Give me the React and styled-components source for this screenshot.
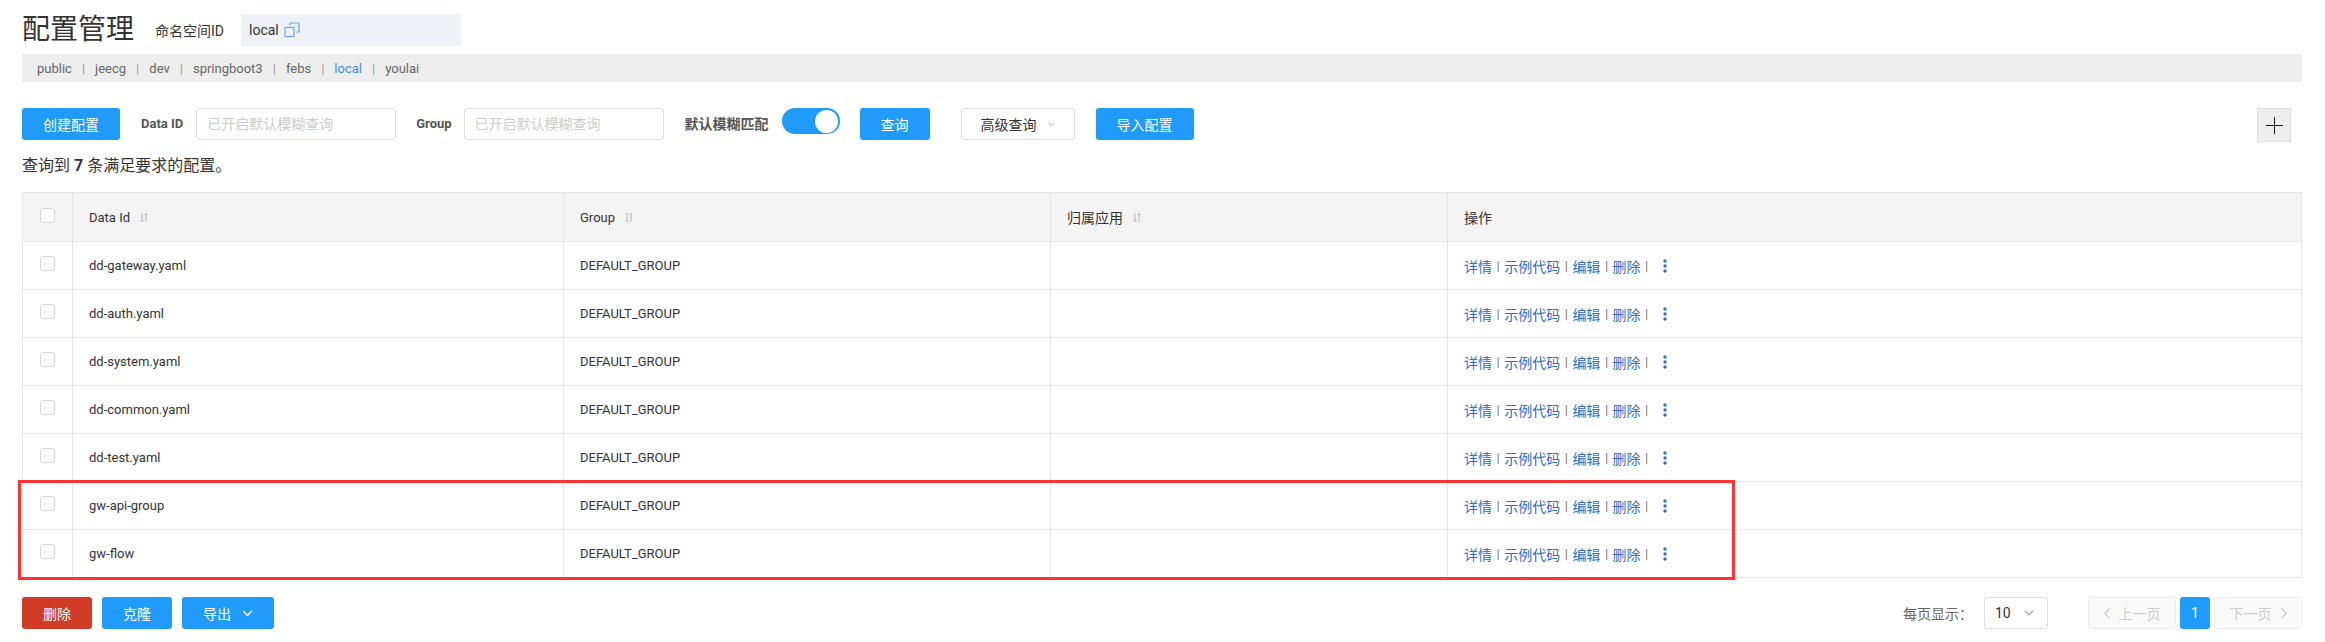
import { Fragment } from 'react';
import styled, { createGlobalStyle, css } from 'styled-components';

const GlobalStyle = createGlobalStyle`
  html, body {
    margin: 0;
    padding: 0;
    background: #fff;
  }
  body {
    font-family: Roboto, "Noto Sans CJK SC", sans-serif;
    color: #333;
  }
  * {
    box-sizing: border-box;
  }
`;

const BLUE = '#209bfa';
const LINK = '#2e6dcb';

const rows = [
  'dd-gateway.yaml',
  'dd-auth.yaml',
  'dd-system.yaml',
  'dd-common.yaml',
  'dd-test.yaml',
  'gw-api-group',
  'gw-flow',
];

const namespaces = ['public', 'jeecg', 'dev', 'springboot3', 'febs', 'local', 'youlai'];

const Page = styled.div`
  padding: 14px 23px 0 22px;
`;

const HeaderRow = styled.div`
  display: flex;
  align-items: center;
  height: 32px;
`;

const Title = styled.h1`
  margin: 0 21px 0 0;
  font-size: 28px;
  font-weight: 400;
  line-height: 32px;
  color: #333;
`;

const NsLabel = styled.span`
  font-size: 14px;
  color: #333;
  margin-right: 17px;
`;

const NsBox = styled.div`
  width: 220px;
  height: 32px;
  background: #eef1f6;
  display: flex;
  align-items: center;
  gap: 5px;
  padding-left: 8px;
  font-size: 14px;
  color: #333;
`;

const NsBar = styled.div`
  margin-top: 8px;
  height: 28px;
  background: #eee;
  display: flex;
  align-items: center;
  padding-left: 15px;
  font-size: 13px;
  color: #666;
`;

const NsItem = styled.span`
  color: ${(p) => (p.$active ? '#3d8ff0' : '#666')};
`;

const NsSep = styled.span`
  margin: 0 10px;
  color: #999;
`;

const Toolbar = styled.div`
  margin-top: 26px;
  height: 34px;
  display: flex;
  align-items: flex-start;
`;

const Button = styled.button`
  height: 32px;
  padding: 0 20px;
  border-radius: 3px;
  border: 1px solid transparent;
  font-family: inherit;
  font-size: 14px;
  display: inline-flex;
  align-items: center;
  gap: 11px;
  cursor: pointer;
  margin-left: ${(p) => p.$ml || 0}px;
  ${(p) =>
    p.$variant === 'danger'
      ? css`
          background: #d23c26;
          color: #fff;
        `
      : p.$variant === 'default'
        ? css`
            background: #fff;
            color: #333;
            border-color: #ddd;
            padding: 0 19px;
          `
        : css`
            background: ${BLUE};
            color: #fff;
          `}
`;

const FieldLabel = styled.span`
  font-size: ${(p) => p.$size || 13}px;
  font-weight: 700;
  color: #555;
  line-height: 32px;
  margin-left: ${(p) => p.$ml}px;
  margin-right: ${(p) => p.$mr}px;
`;

const TextInput = styled.input`
  width: 200px;
  height: 32px;
  border: 1px solid #ddd;
  border-radius: 3px;
  padding: 0 10px;
  font-family: inherit;
  font-size: 14px;
  outline: none;
  &::placeholder {
    color: #ccc;
  }
`;

const Switch = styled.div`
  width: 58px;
  height: 26px;
  border-radius: 13px;
  background: ${BLUE};
  display: flex;
  align-items: center;
  justify-content: flex-end;
  padding-right: 2px;
  margin-right: 20px;
`;

const Knob = styled.span`
  width: 23px;
  height: 23px;
  border-radius: 50%;
  background: #fff;
`;

const PlusButton = styled.button`
  margin-left: auto;
  margin-right: 11px;
  width: 34px;
  height: 34px;
  background: #eee;
  border: 1px solid #ddd;
  padding: 0;
  display: flex;
  align-items: center;
  justify-content: center;
`;

const Summary = styled.p`
  margin: 14px 0 0;
  font-size: 16px;
  line-height: 20px;
  color: #333;
  b {
    font-weight: 700;
  }
`;

const TableWrap = styled.div`
  position: relative;
  margin-top: 16px;
`;

const Table = styled.table`
  width: 100%;
  border-collapse: collapse;
  table-layout: fixed;
  font-size: 13px;
  color: #333;
`;

const Th = styled.th`
  height: 49px;
  background: #f4f4f4;
  border: 1px solid #e6e6e6;
  padding: 0 ${(p) => (p.$center ? 0 : 16)}px;
  text-align: ${(p) => (p.$center ? 'center' : 'left')};
  font-weight: 400;
  font-size: ${(p) => (p.$cjk ? 14 : 13)}px;
`;

const Td = styled.td`
  height: 48px;
  border: 1px solid #e6e6e6;
  padding: 0 ${(p) => (p.$center ? 0 : 16)}px;
  text-align: ${(p) => (p.$center ? 'center' : 'left')};
  vertical-align: middle;
`;

const HeadText = styled.span`
  display: inline-flex;
  align-items: center;
  gap: 10px;
`;

const Checkbox = styled.span`
  display: inline-block;
  width: 15px;
  height: 15px;
  border: 1px solid #d6d6d6;
  border-radius: 3px;
  background: #fff;
  vertical-align: middle;
  margin-bottom: 4px;
`;

const Actions = styled.div`
  display: flex;
  align-items: center;
  font-size: 14px;
`;

const ActionLink = styled.a`
  color: ${LINK};
  text-decoration: none;
`;

const ActionSep = styled.span`
  margin: 0 4.5px;
  color: #777;
  font-size: 13px;
`;

const MoreDots = styled.svg`
  margin-left: 10px;
`;

const Highlight = styled.div`
  position: absolute;
  top: 288px;
  left: -4px;
  width: 1717px;
  height: 100px;
  border: 3px solid #f33;
  pointer-events: none;
`;

const Footer = styled.div`
  margin-top: 19px;
  display: flex;
  align-items: center;
  justify-content: space-between;
`;

const ButtonGroup = styled.div`
  display: flex;
  gap: 10px;
`;

const Pager = styled.div`
  display: flex;
  align-items: center;
`;

const PageSizeLabel = styled.span`
  font-size: 14px;
  color: #666;
  margin-right: 11px;
`;

const Select = styled.div`
  width: 64px;
  height: 32px;
  border: 1px solid #ddd;
  border-radius: 3px;
  display: flex;
  align-items: center;
  justify-content: space-between;
  padding: 0 13px 0 10px;
  font-size: 14px;
  color: #333;
  margin-right: 40px;
`;

const PageButton = styled.div`
  height: 32px;
  width: ${(p) => (p.$current ? 30 : 88)}px;
  border-radius: 3px;
  display: flex;
  align-items: center;
  justify-content: center;
  gap: 9px;
  font-size: 14px;
  margin-right: ${(p) => (p.$last ? 0 : 4)}px;
  ${(p) =>
    p.$current
      ? css`
          background: ${BLUE};
          color: #fff;
        `
      : css`
          background: #fafafa;
          border: 1px solid #eee;
          color: #ccc;
        `}
`;

const CopyIcon = () => (
  <svg width="16" height="16" viewBox="0 0 16 16" fill="none" stroke="#6aa6f6" strokeWidth="1.2">
    <rect x="1" y="5.5" width="9" height="9" />
    <path d="M6 3.5V1h9v9h-2.5" />
  </svg>
);

const SortIcon = () => (
  <svg width="8" height="11" viewBox="0 0 8 11" fill="none" stroke="#b5b5b5" strokeWidth="1">
    <path d="M2 1v8.5M0.5 8l1.5 1.5L3.5 8" />
    <path d="M6 10V1.5M4.5 3L6 1.5 7.5 3" />
  </svg>
);

const Chevron = ({ color = '#999', w = 10, h = 6, sw = 1.2 }) => (
  <svg width={w} height={h} viewBox="0 0 10 6" fill="none" stroke={color} strokeWidth={sw}>
    <path d="M1 0.8l4 4 4-4" />
  </svg>
);

const SideChevron = ({ dir }) => (
  <svg width="6" height="11" viewBox="0 0 6 11" fill="none" stroke="#ccc" strokeWidth="1.2">
    <path d={dir === 'left' ? 'M5.5 0.5L0.8 5.5l4.7 5' : 'M0.5 0.5l4.7 5-4.7 5'} />
  </svg>
);

const actionNames = ['详情', '示例代码', '编辑', '删除'];

const RowActions = () => (
  <Actions>
    {actionNames.map((name) => (
      <Fragment key={name}>
        <ActionLink href="#">{name}</ActionLink>
        <ActionSep>|</ActionSep>
      </Fragment>
    ))}
    <MoreDots width="4" height="14" viewBox="0 0 4 14" fill={LINK}>
      <circle cx="2" cy="2" r="1.7" />
      <circle cx="2" cy="7" r="1.7" />
      <circle cx="2" cy="12" r="1.7" />
    </MoreDots>
  </Actions>
);

export default function App() {
  return (
    <>
      <GlobalStyle />
      <Page>
        <HeaderRow>
          <Title>配置管理</Title>
          <NsLabel>命名空间ID</NsLabel>
          <NsBox>
            local
            <CopyIcon />
          </NsBox>
        </HeaderRow>

        <NsBar>
          {namespaces.map((ns, i) => (
            <Fragment key={ns}>
              {i > 0 && <NsSep>|</NsSep>}
              <NsItem $active={ns === 'local'}>{ns}</NsItem>
            </Fragment>
          ))}
        </NsBar>

        <Toolbar>
          <Button>创建配置</Button>
          <FieldLabel $ml={21} $mr={13}>Data ID</FieldLabel>
          <TextInput placeholder="已开启默认模糊查询" />
          <FieldLabel $ml={20} $mr={12}>Group</FieldLabel>
          <TextInput placeholder="已开启默认模糊查询" />
          <FieldLabel $size={14} $ml={21} $mr={13}>默认模糊匹配</FieldLabel>
          <Switch>
            <Knob />
          </Switch>
          <Button>查询</Button>
          <Button $variant="default" $ml={31}>
            高级查询
            <Chevron w={7} h={5} color="#999" sw={1} />
          </Button>
          <Button $ml={21}>导入配置</Button>
          <PlusButton>
            <svg width="17" height="17" viewBox="0 0 17 17" stroke="#111" strokeWidth="1">
              <path d="M0 8.5h17M8.5 0v17" />
            </svg>
          </PlusButton>
        </Toolbar>

        <Summary>
          查询到 <b>7</b> 条满足要求的配置。
        </Summary>

        <TableWrap>
          <Table>
            <colgroup>
              <col style={{ width: 50 }} />
              <col style={{ width: 491 }} />
              <col style={{ width: 487 }} />
              <col style={{ width: 397 }} />
              <col />
            </colgroup>
            <thead>
              <tr>
                <Th $center>
                  <Checkbox />
                </Th>
                <Th>
                  <HeadText>
                    Data Id <SortIcon />
                  </HeadText>
                </Th>
                <Th>
                  <HeadText>
                    Group <SortIcon />
                  </HeadText>
                </Th>
                <Th $cjk>
                  <HeadText>
                    归属应用 <SortIcon />
                  </HeadText>
                </Th>
                <Th $cjk>操作</Th>
              </tr>
            </thead>
            <tbody>
              {rows.map((id) => (
                <tr key={id}>
                  <Td $center>
                    <Checkbox />
                  </Td>
                  <Td>{id}</Td>
                  <Td>DEFAULT_GROUP</Td>
                  <Td />
                  <Td>
                    <RowActions />
                  </Td>
                </tr>
              ))}
            </tbody>
          </Table>
          <Highlight />
        </TableWrap>

        <Footer>
          <ButtonGroup>
            <Button $variant="danger">删除</Button>
            <Button>克隆</Button>
            <Button>
              导出
              <Chevron color="#fff" w={11} h={7} sw={1.4} />
            </Button>
          </ButtonGroup>
          <Pager>
            <PageSizeLabel>每页显示：</PageSizeLabel>
            <Select>
              10
              <Chevron color="#999" />
            </Select>
            <PageButton>
              <SideChevron dir="left" />
              上一页
            </PageButton>
            <PageButton $current>1</PageButton>
            <PageButton $last>
              下一页
              <SideChevron dir="right" />
            </PageButton>
          </Pager>
        </Footer>
      </Page>
    </>
  );
}
